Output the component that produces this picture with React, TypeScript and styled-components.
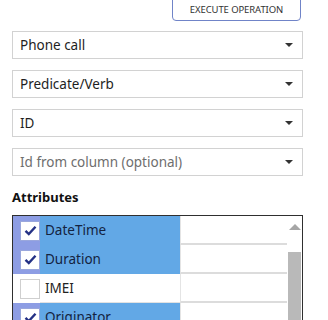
import styled, { createGlobalStyle } from "styled-components";

const Global = createGlobalStyle`
  html, body {
    margin: 0;
    padding: 0;
    background: #ffffff;
    overflow: hidden;
  }
  body {
    font-family: "Noto Sans", "Open Sans", sans-serif;
    color: #222;
  }
`;

const Page = styled.div`
  width: 291px;
  padding: 0 0 0 12px;
  display: flex;
  flex-direction: column;
`;

const Toolbar = styled.div`
  display: flex;
  justify-content: flex-end;
  padding-right: 2px;
  margin-top: -6px;
`;

const ExecButton = styled.button`
  width: 129px;
  height: 27px;
  border: 1px solid #7084c8;
  border-radius: 4px;
  background: #fff;
  color: #333;
  font-family: "Noto Sans", sans-serif;
  font-size: 9.5px;
  padding: 4px 0 0 0;
  letter-spacing: -0.1px;
`;

const Fields = styled.div`
  display: flex;
  flex-direction: column;
  gap: 11px;
  margin-top: 10px;
`;

const Select = styled.div<{ $placeholder?: boolean }>`
  height: 26px;
  border: 1px solid #d2d2d2;
  display: flex;
  align-items: center;
  justify-content: space-between;
  padding: 0 9px 0 7px;
  font-size: 13.5px;
  color: ${(p) => (p.$placeholder ? "#6e6e6e" : "#1e1e1e")};
`;

const Caret = styled.span`
  width: 0;
  height: 0;
  border-left: 4px solid transparent;
  border-right: 4px solid transparent;
  border-top: 4px solid #333;
`;

const Heading = styled.div`
  font-weight: 700;
  font-size: 13px;
  margin-top: 12px;
  color: #111;
`;

const Table = styled.div`
  margin-top: 9px;
  border: 1px solid #2f2f2f;
  border-bottom: none;
  display: flex;
  height: 120px;
`;

const Rows = styled.div`
  flex: 1;
  display: flex;
  flex-direction: column;
`;

const Row = styled.div`
  display: grid;
  grid-template-columns: 27px 140px 1fr;
  height: 29px;
`;

const CheckCell = styled.div<{ $on: boolean }>`
  background: ${(p) => (p.$on ? "#8d9de4" : "#ffffff")};
  display: flex;
  align-items: center;
  justify-content: flex-end;
`;

const Box = styled.div<{ $on: boolean }>`
  width: 18px;
  height: 18px;
  border: 1px solid ${(p) => (p.$on ? "#9aa7dc" : "#cfcfcf")};
  background: #fff;
  display: flex;
  align-items: center;
  justify-content: center;
`;

const NameCell = styled.div<{ $on: boolean }>`
  background: ${(p) => (p.$on ? "#62a8e6" : "#ffffff")};
  display: flex;
  align-items: center;
  padding-left: 5px;
  font-size: 13.5px;
  color: ${(p) => (p.$on ? "#14233f" : "#222")};
  border-bottom: 1px solid ${(p) => (p.$on ? "transparent" : "#e2e2e2")};
`;

const ValueCell = styled.div`
  background: #fff;
  border-left: 1px solid #e4e4e4;
  border-bottom: 2px solid #dcdcdc;
`;

const Scrollbar = styled.div`
  width: 15px;
  display: flex;
  flex-direction: column;
  align-items: center;
  background: #fff;
`;

const ArrowUp = styled.span`
  margin-top: 8px;
  width: 0;
  height: 0;
  border-left: 6px solid transparent;
  border-right: 6px solid transparent;
  border-bottom: 6px solid #a6a6a6;
`;

const Thumb = styled.div`
  margin-top: 22px;
  width: 13px;
  flex: 1;
  background: #b9b9b9;
`;

const Check = () => (
  <svg width="13" height="11" viewBox="0 0 13 11">
    <path d="M1.5 5.8 L4.8 9 L11.5 1.8" fill="none" stroke="#243185" strokeWidth="2.4" />
  </svg>
);

const attrs = [
  { name: "DateTime", on: true },
  { name: "Duration", on: true },
  { name: "IMEI", on: false },
  { name: "Originator", on: true },
];

export default function App() {
  return (
    <>
      <Global />
      <Page>
        <Toolbar>
          <ExecButton>EXECUTE OPERATION</ExecButton>
        </Toolbar>
        <Fields>
          <Select>
            Phone call
            <Caret />
          </Select>
          <Select>
            Predicate/Verb
            <Caret />
          </Select>
          <Select>
            ID
            <Caret />
          </Select>
          <Select $placeholder>
            Id from column (optional)
            <Caret />
          </Select>
        </Fields>
        <Heading>Attributes</Heading>
        <Table>
          <Rows>
            {attrs.map((a) => (
              <Row key={a.name}>
                <CheckCell $on={a.on}>
                  <Box $on={a.on}>{a.on && <Check />}</Box>
                </CheckCell>
                <NameCell $on={a.on}>{a.name}</NameCell>
                <ValueCell />
              </Row>
            ))}
          </Rows>
          <Scrollbar>
            <ArrowUp />
            <Thumb />
          </Scrollbar>
        </Table>
      </Page>
    </>
  );
}
